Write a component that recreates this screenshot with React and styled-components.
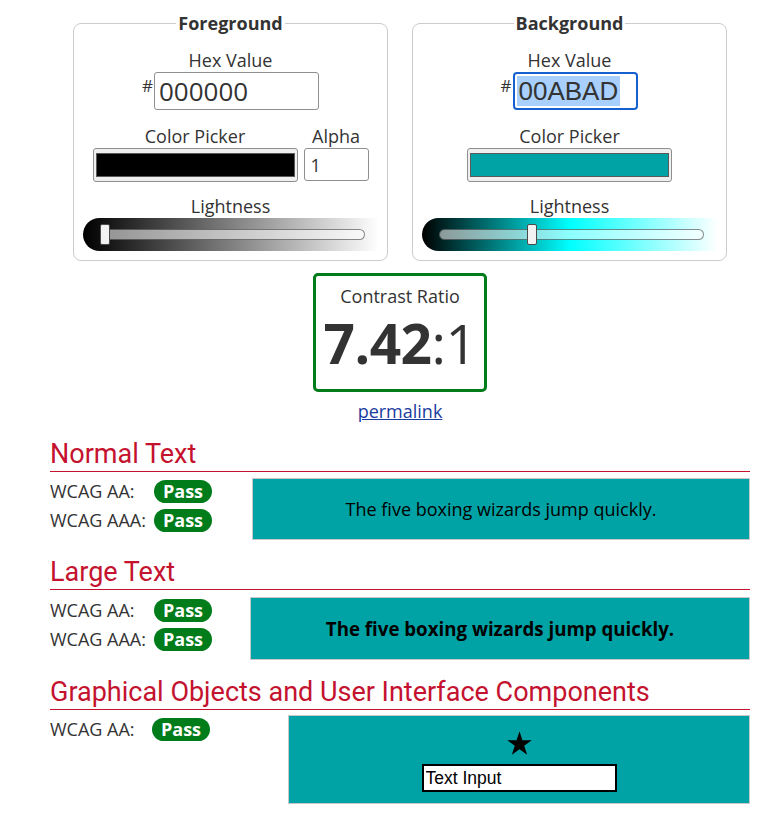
import React from 'react';
import styled, { createGlobalStyle } from 'styled-components';

const GlobalStyle = createGlobalStyle`
  html, body { margin: 0; padding: 0; background: #fff; }
  body {
    font-family: "Open Sans", "Liberation Sans", sans-serif;
    color: #333;
    font-size: 18px;
    line-height: 23px;
  }
  * { box-sizing: border-box; }
`;

const GREEN = '#007c1b';
const RED = '#c4122f';
const TEAL = '#00a3a5';

const Page = styled.main`
  width: 700px;
  margin-left: 50px;
  padding-top: 12px;
  padding-bottom: 8px;
`;

const Pickers = styled.div`
  display: flex;
  justify-content: center;
  gap: 24px;
`;

const Panel = styled.fieldset`
  width: 315px;
  min-width: 0;
  margin: 0;
  padding: 14px 0 9px;
  border: 1px solid #ccc;
  border-radius: 8px;
  display: flex;
  flex-direction: column;
  align-items: center;
`;

const Legend = styled.legend`
  margin: 0 auto;
  padding: 0 2px;
  font-weight: 700;
  font-size: 18px;
  line-height: 23px;
`;

const Label = styled.div`
  font-size: 18px;
  line-height: 23px;
  text-align: center;
  white-space: nowrap;
`;

const HexRow = styled.div`
  display: flex;
  align-items: flex-start;
`;

const Hash = styled.span`
  font-size: 17px;
  line-height: 17px;
  margin-top: 5px;
  margin-right: ${(p) => p.$gap}px;
`;

const HexInput = styled.input`
  width: 165px;
  height: 38px;
  border: 1px solid #8f8f8f;
  border-radius: 3px;
  padding: 0 4px;
  font-family: "Open Sans", sans-serif;
  font-size: 26px;
  color: #333;
  background: #fff;
  outline: none;
`;

const FocusedHex = styled.div`
  width: 125px;
  height: 38px;
  border: 2px solid #1760cf;
  border-radius: 4px;
  padding: 0 2px;
  display: flex;
  align-items: center;
  background: #fff;
`;

const Selected = styled.span`
  font-family: "Liberation Sans", Arial, sans-serif;
  font-size: 26px;
  line-height: 30px;
  color: #333;
  background: #a9d0fc;
  padding: 0 2px 0 1px;
`;

const PickerRow = styled.div`
  display: flex;
  gap: 6px;
  margin-top: 15px;
`;

const Column = styled.div`
  display: flex;
  flex-direction: column;
  align-items: center;
`;

const Swatch = styled.div`
  width: 205px;
  height: 34px;
  border: 1px solid #8f8f8f;
  border-radius: 3px;
  background: #efefef;
  padding: 4px 2px;
`;

const SwatchFill = styled.div`
  width: 100%;
  height: 100%;
  border: 1px solid #5a5a5a;
  background: ${(p) => p.$color};
`;

const AlphaInput = styled.input`
  width: 65px;
  height: 33px;
  border: 1px solid #8f8f8f;
  border-radius: 3px;
  padding: 0 6px;
  font-family: "Open Sans", sans-serif;
  font-size: 18px;
  color: #333;
  background: #fff;
  outline: none;
`;

const LightnessLabel = styled(Label)`
  margin-top: 13px;
`;

const Slider = styled.div`
  width: 296px;
  height: 33px;
  border-radius: 17px 0 0 17px;
  background: ${(p) => p.$gradient};
  padding: 0 14px 0 17px;
  display: flex;
  align-items: center;
`;

const Track = styled.div`
  position: relative;
  flex: 1;
  height: 11px;
  border: 1px solid rgba(0, 0, 0, 0.45);
  border-radius: 6px;
  background: rgba(255, 255, 255, 0.55);
`;

const Thumb = styled.div`
  position: absolute;
  top: -6px;
  width: 10px;
  height: 21px;
  background: #f2f2f2;
  border: 1px solid #4a4a4a;
  border-radius: 2px;
`;

const RatioWrap = styled.div`
  display: flex;
  flex-direction: column;
  align-items: center;
  margin-top: 12px;
`;

const RatioBox = styled.div`
  width: 174px;
  height: 119px;
  border: 3px solid ${GREEN};
  border-radius: 5px;
  padding-top: 9px;
  display: flex;
  flex-direction: column;
  align-items: center;
`;

const RatioValue = styled.div`
  margin-top: 8px;
  font-size: 55px;
  line-height: 54px;
  color: #333;
  letter-spacing: -0.5px;
`;

const Strong = styled.strong`
  font-weight: 700;
`;

const Permalink = styled.a`
  margin-top: 8px;
  color: #1b3c9e;
  text-decoration: underline;
  font-size: 18px;
  line-height: 23px;
`;

const Heading = styled.h2`
  margin: ${(p) => p.$top}px 0 0;
  padding-bottom: 2px;
  border-bottom: 1px solid ${RED};
  font-family: Roboto, "Liberation Sans", sans-serif;
  font-weight: 400;
  font-size: 27px;
  line-height: 30px;
  color: ${RED};
`;

const ResultGrid = styled.div`
  display: grid;
  grid-template-columns: ${(p) => p.$side}px 1fr;
  margin-top: ${(p) => p.$top}px;
`;

const Results = styled.div`
  display: flex;
  flex-direction: column;
  gap: 6px;
  padding-top: ${(p) => p.$pad}px;
`;

const ResultRow = styled.div`
  display: flex;
  align-items: center;
`;

const Level = styled.span`
  width: ${(p) => p.$width}px;
  font-size: 18px;
  line-height: 23px;
  white-space: nowrap;
`;

const Badge = styled.span`
  width: 58px;
  height: 23px;
  border-radius: 12px;
  background: ${GREEN};
  color: #fff;
  font-weight: 700;
  font-size: 18px;
  line-height: 23px;
  text-align: center;
`;

const Sample = styled.div`
  height: ${(p) => p.$height}px;
  border: 1px solid #c8c8c8;
  background: ${TEAL};
  color: #000;
  display: flex;
  align-items: center;
  justify-content: center;
  font-size: ${(p) => (p.$large ? 18.7 : 18)}px;
  font-weight: ${(p) => (p.$large ? 700 : 400)};
`;

const UiSample = styled.div`
  height: 89px;
  border: 1px solid #c8c8c8;
  background: ${TEAL};
  display: flex;
  flex-direction: column;
  align-items: center;
  padding-top: 14px;
  gap: 7px;
`;

const DemoInput = styled.input`
  width: 195px;
  height: 28px;
  border: 2px solid #000;
  background: #fff;
  padding: 0 2px;
  font-family: "Liberation Sans", Arial, sans-serif;
  font-size: 17.5px;
  color: #000;
  outline: none;
`;

const Star = () => (
  <svg width="27" height="27" viewBox="0 0 24 24" aria-hidden="true">
    <path d="M12 1.2l2.6 7.9h8.3l-6.7 4.9 2.6 7.9L12 17l-6.8 4.9 2.6-7.9-6.7-4.9h8.3z" fill="#000" />
  </svg>
);

const LightnessSlider = ({ gradient, pct }) => (
  <Slider $gradient={gradient}>
    <Track>
      <Thumb style={{ left: `calc(${pct} * (100% - 10px) - 1px)` }} />
    </Track>
  </Slider>
);

const Result = ({ level, width }) => (
  <ResultRow>
    <Level $width={width}>{level}</Level>
    <Badge>Pass</Badge>
  </ResultRow>
);

const SAMPLE = 'The five boxing wizards jump quickly.';

export default function App() {
  return (
    <>
      <GlobalStyle />
      <Page>
        <Pickers>
          <Panel>
            <Legend>Foreground</Legend>
            <Label>Hex Value</Label>
            <HexRow>
              <Hash $gap={1}>#</Hash>
              <HexInput readOnly value="000000" />
            </HexRow>
            <PickerRow>
              <Column>
                <Label>Color Picker</Label>
                <Swatch>
                  <SwatchFill $color="#000" />
                </Swatch>
              </Column>
              <Column>
                <Label>Alpha</Label>
                <AlphaInput readOnly value="1" />
              </Column>
            </PickerRow>
            <LightnessLabel>Lightness</LightnessLabel>
            <LightnessSlider gradient="linear-gradient(to right, #000 0%, #fff 100%)" pct={0} />
          </Panel>
          <Panel>
            <Legend>Background</Legend>
            <Label>Hex Value</Label>
            <HexRow>
              <Hash $gap={2}>#</Hash>
              <FocusedHex>
                <Selected>00ABAD</Selected>
              </FocusedHex>
            </HexRow>
            <PickerRow>
              <Column>
                <Label>Color Picker</Label>
                <Swatch>
                  <SwatchFill $color={TEAL} />
                </Swatch>
              </Column>
            </PickerRow>
            <LightnessLabel>Lightness</LightnessLabel>
            <LightnessSlider
              gradient="linear-gradient(to right, #000 0%, #00abad 34%, #00ffff 50%, #fff 100%)"
              pct={0.35}
            />
          </Panel>
        </Pickers>

        <RatioWrap>
          <RatioBox>
            <Label>Contrast Ratio</Label>
            <RatioValue>
              <Strong>7.42</Strong>:1
            </RatioValue>
          </RatioBox>
          <Permalink href="#">permalink</Permalink>
        </RatioWrap>

        <Heading $top={16}>Normal Text</Heading>
        <ResultGrid $side={202} $top={6}>
          <Results $pad={2}>
            <Result level="WCAG AA:" width={104} />
            <Result level="WCAG AAA:" width={104} />
          </Results>
          <Sample $height={62}>{SAMPLE}</Sample>
        </ResultGrid>

        <Heading $top={17}>Large Text</Heading>
        <ResultGrid $side={200} $top={7}>
          <Results $pad={2}>
            <Result level="WCAG AA:" width={104} />
            <Result level="WCAG AAA:" width={104} />
          </Results>
          <Sample $height={63} $large>{SAMPLE}</Sample>
        </ResultGrid>

        <Heading $top={17}>Graphical Objects and User Interface Components</Heading>
        <ResultGrid $side={238} $top={5}>
          <Results $pad={3}>
            <Result level="WCAG AA:" width={102} />
          </Results>
          <UiSample>
            <Star />
            <DemoInput readOnly value="Text Input" />
          </UiSample>
        </ResultGrid>
      </Page>
    </>
  );
}
